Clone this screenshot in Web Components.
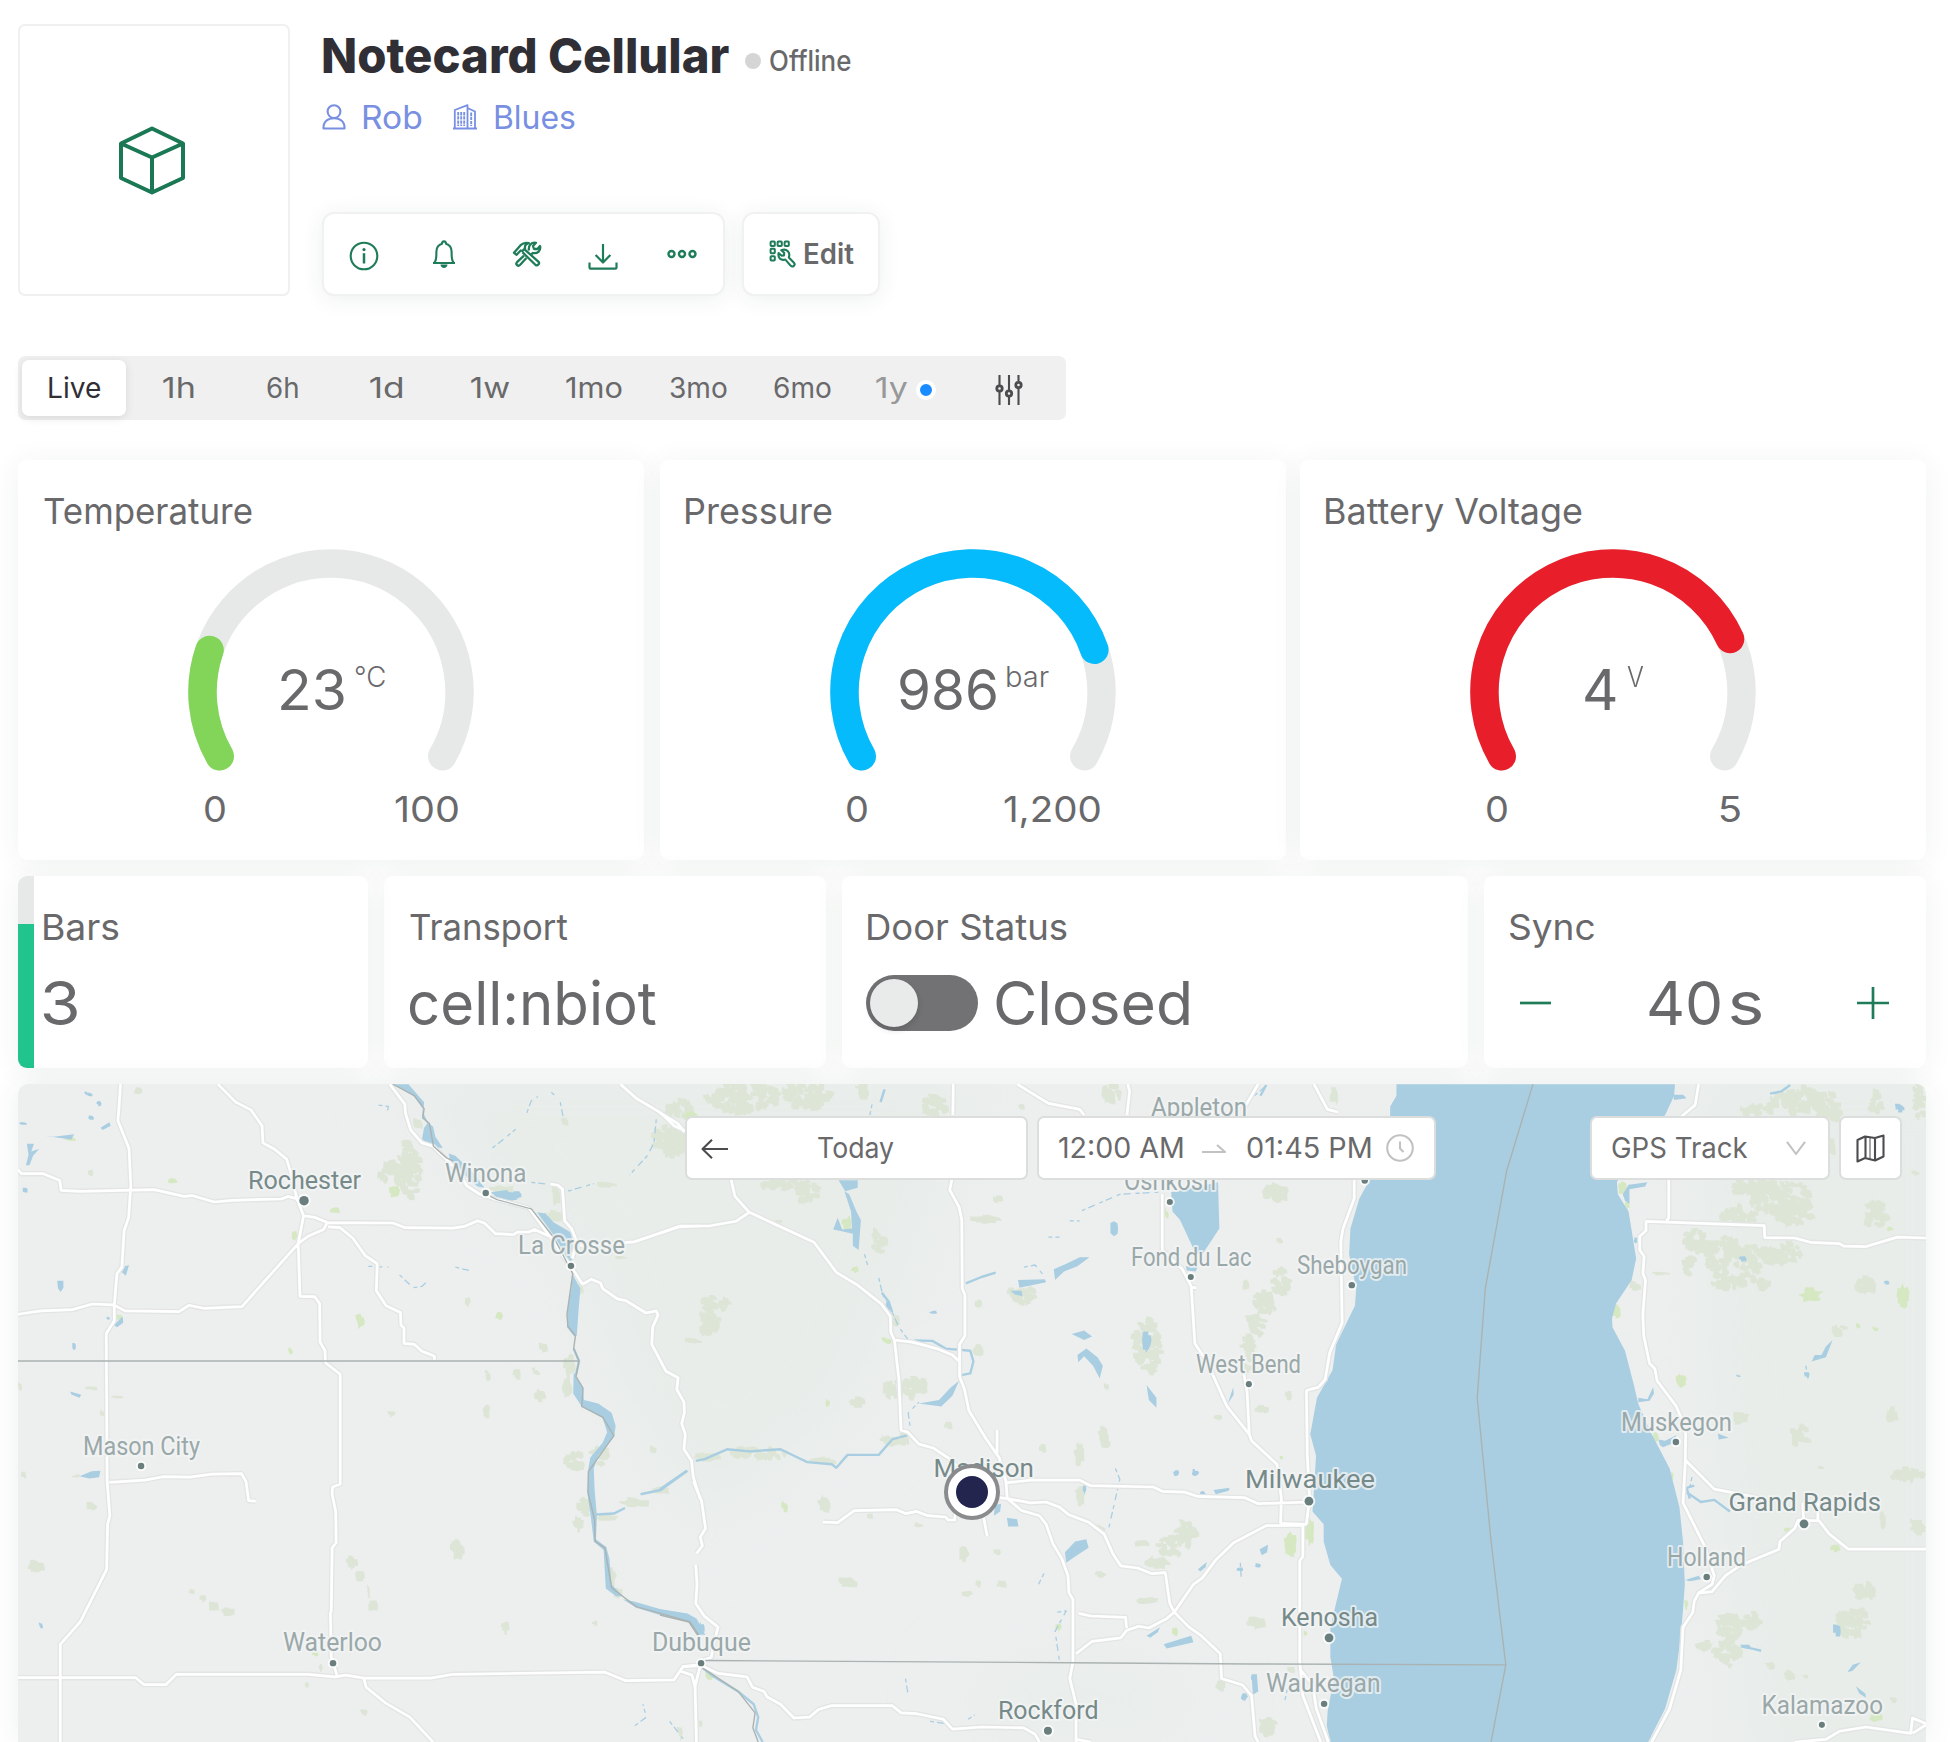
<!DOCTYPE html>
<html lang="en">
<head>
<meta charset="utf-8">
<title>Notecard Cellular</title>
<style>
html,body{margin:0;background:#fff}
body{width:1950px;height:1742px;overflow:hidden;font-family:Inter,"Liberation Sans",sans-serif;color:#69696b}
</style>
</head>
<body>
<device-dashboard></device-dashboard>
<script>
const define = (name, html, setup) => customElements.define(name, class extends HTMLElement {
  constructor() { super(); this.attachShadow({ mode: 'open' }); }
  connectedCallback() {
    this.shadowRoot.innerHTML = typeof html === 'function' ? html(this) : html;
    if (setup) setup(this, this.shadowRoot);
  }
});

/* A single line of text stretched to a given ink width */
define('fit-text', el => `<style>:host{display:inline-block;white-space:pre;line-height:1;flex:none;width:${el.getAttribute('w')}px}span{display:inline-block;transform-origin:0 50%}</style><span>${el.getAttribute('t')}</span>`,
(el, root) => {
  const s = root.querySelector('span'), w = +el.getAttribute('w'), t = el.getAttribute('t');
  const cs = getComputedStyle(el), ctx = document.createElement('canvas').getContext('2d');
  ctx.font = `${cs.fontWeight} ${cs.fontSize} Inter, "Liberation Sans", sans-serif`;
  const m = ctx.measureText(t), left = -m.actualBoundingBoxLeft, ink = m.actualBoundingBoxRight - left;
  const k = w / ink;
  s.style.transform = `translateX(${-left * k}px) scaleX(${k})`;
});

const ICONS = {
  cube: ['0 0 66 69', '<path d="M33 2.5 64 17.5V52L33 66.5 2 52V17.5ZM2 17.5 33 31.5 64 17.5M33 31.5V66.5" stroke-width="4"/>'],
  user: ['0 0 24 26', '<circle cx="12" cy="7.6" r="6.4"/><path d="M1.5 24.5C1 17.5 6 14.3 12 14.3S23 17.5 22.5 24.5Z"/>'],
  building: ['0 0 24 26', '<g stroke-width="1.8"><path d="M0 24.5H24M1.8 24.5V6L14.5 1.2V24.5M14.5 4 22 7.5V24.5"/></g><path d="M5.2 8V22M8.2 8V22M11.2 8V22M18.2 8.5V22" stroke-dasharray="3.4 .8" stroke-width="1.9"/>'],
  info: ['0 0 30 30', '<circle cx="15" cy="15" r="13.3"/><path d="M15 12.2V22.5" stroke-width="2.5"/><circle cx="15" cy="8.6" r="1.6" fill="currentColor" stroke="none"/>'],
  bell: ['0 0 26 30', '<path d="M2 24H24M3.2 24C6 20.5 5.2 17 5.4 12.5 5.6 8.3 8 5.6 11 4.8 11 1.5 15 1.5 15 4.8 18 5.6 20.4 8.3 20.6 12.5 20.8 17 20 20.5 22.8 24"/><path d="M9.5 25.5H16.5C16.5 30 9.5 30 9.5 25.5Z" fill="currentColor" stroke="none"/>'],
  tools: ['0 0 30 26', '<g stroke-width="2.3"><path d="M2 11.8 8.6 4.2C11.5 1.4 14 1.4 16.8 2.2 13.8 3 12.6 5 13 7.4L10.4 10 8.7 9.5 4.6 13.8Z"/><path d="M12.8 8.6 26.6 20.8C28 22.5 25.6 25.2 23.6 24L10.4 11.2"/><path d="M17 9.5C16 4.5 19.4 1 24 1.8L21 5 22 8 25.4 8 28 5C29.2 9.5 25.5 13 21 12L19.2 13.4M14.4 17 8.2 23.8C6 26 3.2 23.2 5 21.2L12 14.6"/></g>'],
  download: ['0 0 30 27', '<path d="M15 1V19.5M7.6 12 15 19.5 22.4 12M1.5 19.5V24.5Q1.5 25.6 2.6 25.6H27.4Q28.5 25.6 28.5 24.5V19.5" stroke-width="2.2"/>'],
  dots: ['0 0 30 10', '<g stroke-width="2.4"><circle cx="4.5" cy="5" r="3"/><circle cx="15" cy="5" r="3"/><circle cx="25.5" cy="5" r="3"/></g>'],
  edit: ['0 0 27 28', '<g stroke-width="2"><rect x="1.6" y="1.6" width="4.2" height="4.4" rx=".8"/><rect x="8.6" y="1.6" width="4.2" height="4.4" rx=".8"/><rect x="15.6" y="1.6" width="4.2" height="4.4" rx=".8"/><rect x="1.6" y="8.8" width="4.2" height="4.4" rx=".8"/><rect x="1.6" y="16.2" width="4.2" height="4.4" rx=".8"/></g><path d="M12.3 10.2 15.2 12.8 15 15.5 12.4 15.6 9.6 13C8.6 17.5 11.5 20.8 16.4 19.6L21.6 25.6C23.8 27.8 26.8 25 25 22.8L19.8 17.4C21.6 12.6 18 8.2 12.3 10.2Z"/>'],
  sliders: ['0 0 28 30', '<path d="M4.5 0V10.5M4.5 17V30M14 0V15.5M14 22V30M23.5 0V6.5M23.5 13V30"/><g stroke-width="2.8"><circle cx="4.5" cy="13.5" r="2.7"/><circle cx="14" cy="18.5" r="2.7"/><circle cx="23.5" cy="10" r="2.7"/></g>'],
  minus: ['0 0 32 32', '<path d="M0 16H31" stroke-width="2.7"/>'],
  plus: ['0 0 32 32', '<path d="M0 16H32M16 0V32" stroke-width="2.7"/>'],
  back: ['0 0 28 20', '<path d="M27 10H1.5M11 .8 1.5 10 11 19.2"/>'],
  to: ['0 0 24 12', '<path d="M0 10H23L15 3"/>'],
  clock: ['0 0 28 28', '<circle cx="14" cy="14" r="12.8"/><path d="M14 7.5V14.5L17.5 18"/>'],
  down: ['0 0 20 14', '<path d="M1 .8 10 13 19 .8"/>'],
  map: ['0 0 29 29', '<path d="M1.5 6 9 2.5 19 4 27.5 1.5V22.5L19 26.5 9 24 1.5 27.5ZM9.5 2.5V24M19 4V26.5"/><path d="M14 3.5V25" stroke-width="1"/>']
};
define('ui-icon', el => { const [vb, body] = ICONS[el.getAttribute('name')]; const [, , w, h] = vb.split(' ');
  return `<style>:host{display:block;flex:none;width:${w}px;height:${h}px}svg{display:block;overflow:visible}</style><svg width="${w}" height="${h}" viewBox="${vb}" fill="none" stroke="currentColor" stroke-width="2.1" stroke-linejoin="round">${body}</svg>`; });

define('tool-panel', `<style>:host{display:flex;box-sizing:border-box;height:84px;border:2px solid #f0f1f1;border-radius:12px;background:#fff;color:#1f7c58;box-shadow:0 3px 22px rgba(20,60,50,.075);align-items:center}</style><slot></slot>`);

define('device-header', `<style>
:host{display:flex;gap:32px;padding-top:24px;height:272px}
.pic{box-sizing:border-box;width:272px;height:272px;border:2px solid #f0f0f0;border-radius:7px;display:grid;place-items:center;color:#1a7855;flex:none;padding-right:4px}
.line{display:flex;align-items:center}
.t{height:64px;color:#302f35;font-size:48.5px;font-weight:800}
.t .st{font-size:28px;font-weight:450;color:#69696b;display:flex;align-items:center;gap:9px;padding-top:10px;margin-left:16px}
.dot{width:16px;height:16px;border-radius:50%;background:#d5d5d5}
.l{height:40px;margin-top:10px;color:#788fe2;font-size:32px}
.tools{gap:17px;margin-top:74px}
.cell{width:80px;display:grid;place-items:center}
.a{width:403px;box-sizing:border-box}.b{width:138px;font-size:28px;font-weight:600}
</style>
<div class="pic"><ui-icon name="cube"></ui-icon></div>
<div>
<div class="line t"><fit-text style="margin-left:1px" w="406" t="Notecard Cellular"></fit-text><span class="st"><i class="dot"></i><fit-text w="81" t="Offline"></fit-text></span></div>
<div class="line l"><ui-icon name="user" style="margin-top:-2px"></ui-icon><fit-text style="margin-left:17px" w="58" t="Rob"></fit-text><ui-icon style="margin-left:32px;margin-top:-2px" name="building"></ui-icon><fit-text style="margin-left:18px" w="80" t="Blues"></fit-text></div>
<div class="line tools"><tool-panel class="a"><div class="cell" style="padding-top:3px"><ui-icon name="info"></ui-icon></div><div class="cell"><ui-icon name="bell"></ui-icon></div><div class="cell" style="padding-left:3px;margin-right:-3px;box-sizing:border-box"><ui-icon style="margin-top:-1px;margin-left:2px" name="tools"></ui-icon></div><div class="cell" style="padding-top:5px;padding-left:3px;box-sizing:border-box"><ui-icon name="download"></ui-icon></div><div class="cell"><ui-icon style="margin-left:2px;margin-top:-1px" name="dots"></ui-icon></div></tool-panel>
<tool-panel class="b"><ui-icon style="margin-left:25px" name="edit"></ui-icon><fit-text style="margin-left:9px;color:#69696b" w="49" t="Edit"></fit-text></tool-panel></div>
</div>`);

define('range-bar', `<style>
:host{display:flex;align-items:center;box-sizing:border-box;width:1048px;height:64px;margin-top:60px;padding:4px;border-radius:7px;background:#f0f0f0;font-size:28px}
.i{width:104px;height:56px;display:flex;align-items:center;justify-content:center}
.on{background:#fff;border-radius:7px;color:#302f35;box-shadow:0 2px 10px rgba(0,0,0,.1)}
.y{color:#98989a;gap:9px;width:104px}
.d{width:12px;height:12px;border-radius:50%;background:#1a8cff;border:4px solid #fff;margin-top:4px}
</style><div class="i on"><fit-text w="51" t="Live"></fit-text></div><div class="i"><fit-text w="31" t="1h"></fit-text></div><div class="i"><fit-text w="31" t="6h"></fit-text></div><div class="i"><fit-text w="32" t="1d"></fit-text></div><div class="i"><fit-text w="38" t="1w"></fit-text></div><div class="i"><fit-text w="56" t="1mo"></fit-text></div><div class="i"><fit-text w="57" t="3mo"></fit-text></div><div class="i"><fit-text w="57" t="6mo"></fit-text></div><div class="i y"><fit-text w="31" t="1y"></fit-text><i class="d"></i></div><div class="i" style="color:#4c4c4f;padding-top:4px;box-sizing:border-box;margin-left:-1px"><ui-icon name="sliders"></ui-icon></div>`);

define('data-card', el => `<style>
:host{display:block;box-sizing:border-box;background:#fff;border-radius:9px;padding:29px 24px 0;box-shadow:0 3px 30px rgba(20,60,45,.065);flex:none}
.h{height:44px;display:flex;align-items:center;font-size:36px;margin-left:1.5px}
</style><div class="h"><fit-text w="${el.getAttribute('tw')}" t="${el.getAttribute('label')}"></fit-text></div><slot></slot>`);

define('arc-gauge', el => {
  const g = n => el.getAttribute(n), pt = a => [143 + 128.5 * Math.cos(a * Math.PI / 180), 143 - 128.5 * Math.sin(a * Math.PI / 180)].map(v => v.toFixed(2)).join(' ');
  const arc = s => `M${pt(210)}A128.5 128.5 0 ${s > 180 ? 1 : 0} 1 ${pt(210 - s)}`;
  return `<style>
:host{display:flex;flex-direction:column;align-items:center;margin-top:16px}
.g{display:grid;place-items:center;height:222px}.g>*{grid-area:1/1}
svg{align-self:start;display:block}
.v{display:flex;gap:11px;align-self:start;align-items:center;height:56px;margin-top:113px;margin-left:3px;font-size:56.5px}
.u{font-size:28px;font-weight:300;margin-top:-26px}
.r{width:253px;height:40px;margin-top:18px;display:flex;justify-content:space-between;align-items:center;font-size:36px}
</style><div class="g"><svg width="286" height="222" fill="none" stroke-width="28.5" stroke-linecap="round"><path d="${arc(240)}" stroke="#e7e9e8"/><path d="${arc(+g('sweep'))}" stroke="${g('color')}"/></svg>
<div class="v"><fit-text w="${g('vw')}" t="${g('value')}"></fit-text><fit-text class="u" w="${g('uw')}" t="${g('unit')}"></fit-text></div></div>
<div class="r"><fit-text w="20" t="0"></fit-text><fit-text w="${g('mw')}" t="${g('max')}"></fit-text></div>`; });

define('big-value', `<style>:host{display:flex;align-items:center;height:60px;margin-top:24px;font-size:60.5px}</style><slot></slot>`);
define('toggle-switch', `<style>:host{display:flex;box-sizing:border-box;width:112px;height:56px;border-radius:28px;padding:4px;background:#727274}i{width:48px;height:48px;border-radius:50%;background:#e9ebea;box-shadow:0 3px 6px rgba(0,0,0,.15)}</style><i></i>`);
define('level-bar', `<style>:host{display:flex;flex-direction:column;justify-content:flex-end;position:absolute;left:0;top:0;width:16px;height:192px;background:#e7e9e8}i{height:75%;background:#22c48d}</style><i></i>`);

/* ---------- Map ---------- */
const KX = 2.24, KY = 7 / 3;
const SHEETS = [
{ x: 0,
  water: ['882,33 915,33 950,75 948,100 960,125 970,132 975,155 992,182 972,180 945,162 950,135 957,125 945,108 947,90 928,62','1005,195 1020,200 1060,240 1085,275 1070,272 1030,235 1008,208','1100,285 1135,280 1160,302 1145,305 1115,300','1203,332 1222,335 1240,355 1280,380 1284,440 1275,450 1255,410 1240,385','1283,478 1300,510 1296,560 1292,620 1285,620 1270,600 1271,560 1280,510','1285,705 1306,742 1308,770 1340,778 1370,800 1379,830 1376,855 1340,900 1330,930 1332,980 1337,1040 1335,1095 1358,1113 1365,1140 1370,1200 1395,1228 1380,1228 1357,1210 1352,1120 1330,1100 1323,1040 1316,990 1318,930 1322,905 1350,870 1360,845 1350,812 1303,785 1284,755','1395,1235 1420,1240 1480,1258 1540,1268 1560,1280 1580,1318 1562,1318 1545,1287 1480,1272 1425,1255','178,948 205,936 225,935 222,950 200,953','225,135 245,122 248,130 230,140','58,222 64,198 60,172 76,172 70,190 88,184 74,200 66,222','96,153 120,156 166,150 160,162 130,158','273,472 280,458 289,455 282,480','128,492 142,492 142,508 136,518 130,510','157,750 182,758 178,765 160,757','255,595 275,575 276,590 262,600'],
  streams: ['1335,1037 1375,1035 1400,1022','1435,990 1480,980 1500,965 1540,935','1285,650 1297,679 1290,712'],
  thin: ['848,82 870,85 868,95','1103,182 1130,160 1155,138','1180,100 1190,72 1205,62','1235,52 1245,62','1255,75 1262,112','1470,115 1465,170 1450,200 1410,245','1190,262 1240,268 1275,282 1330,265','895,478 925,508 945,505 960,490','1020,460 1060,470','825,458 870,460','1422,1530 1448,1510 1440,1480','1500,1520 1530,1560'],
  park: [[917,235,48,130],[880,238,60,45],[935,125,20,30],[1265,120,18,26],[1520,165,75,55],[1520,92,60,40],[1245,290,20,60],[1355,268,45,14],[1130,280,60,20],[1245,340,50,30],[203,240,14,18],[310,48,20,24],[1048,540,14,22],[1217,648,20,20],[1275,690,30,50],[1270,740,20,50],[1157,712,18,32],[1092,712,14,22],[1208,760,26,34],[1090,797,18,28],[1200,705,16,18],[877,803,20,14],[1285,912,38,46],[1310,1010,26,60],[1295,1060,30,34],[1465,887,18,18],[53,944,12,20],[1025,1118,28,46],[205,742,38,10],[262,763,26,8],[230,802,14,18],[205,1018,28,18],[80,1160,34,30],[430,1217,16,10],[455,1232,20,20],[480,1250,26,24],[510,1265,34,20],[790,1150,26,34],[808,1180,20,30],[825,1215,8,36],[835,1250,20,28],[1130,1300,20,30],[1333,1290,14,14],[817,1500,18,14],[1370,1180,20,40],[1385,1220,26,24],[1420,1010,60,22],[1480,980,50,22],[1360,1045,50,16],[1390,438,24,8],[1550,630,30,14],[688,1435,10,20],[45,740,10,22],[1345,900,30,60],[1295,512,20,30],[172,948,20,8],[718,1395,10,18]],
  green: [[387,259,20,16],[882,282,24,32],[750,328,22,16],[659,388,14,26],[806,584,24,38],[650,656,14,18],[1118,573,18,22],[267,578,18,18],[155,160,24,12],[1545,108,34,20],[707,1363,18,8]],
  pond: [[197,56,16,12],[222,78,14,12],[203,111,14,12],[50,125,18,10],[57,281,12,12],[166,645,12,18],[91,1296,9,16],[243,579,8,7],[1150,290,30,16]],
  roads: ['270,33 266,95 264,118 289,183 293,270 288,345 278,375 273,460 262,475 256,550 256,585 238,615 240,960 246,1040 241,1060 239,1165 180,1287 135,1340 135,1568','40,232 48,242 97,242 134,258 137,281 180,283 345,279 412,295 430,293 480,308 520,304 630,301 645,295 665,300','488,33 528,75 562,93 587,130 589,170 615,185 642,208 650,235 665,300 680,340 706,344 733,356 880,357 908,368 1015,369 1040,365 1070,352 1085,357 1110,382 1150,384 1160,378 1185,378 1197,372 1235,390','680,340 668,405 672,528 705,529 716,545 717,635 728,655 729,683 762,710 762,966 745,973 744,990 752,1030 753,1103 744,1115 742,1262 740,1268 742,1370 755,1413','733,356 725,372 690,388 668,405 542,552 456,556 423,549 401,564 280,562 255,548 207,546 163,559 92,562 40,570','735,366 762,368 790,392 818,433 845,452 843,515 865,550 897,566 898,595 905,602 905,638 928,640 945,656 960,662 973,668 973,676','873,33 907,80 908,100 920,140 945,170 970,178 1030,240 1045,270 1075,290 1105,300 1185,322 1240,400 1262,435 1278,457 1305,500','1233,266 1250,269 1260,278 1265,352 1280,370 1292,400 1282,440','1305,500 1325,488 1345,497 1350,510 1383,534 1402,538 1447,567 1470,562 1474,572 1462,600 1460,640 1492,703 1519,718 1516,745 1532,775 1533,800 1527,825 1535,850 1532,885 1549,912 1553,950 1568,1000','1300,410 1400,403 1420,401 1520,366 1568,364','1390,33 1425,66 1480,100 1510,130 1535,142','245,962 325,957 365,949 425,950 475,943 541,942 551,960 557,1005 573,1006','40,1418 304,1418 322,1434 372,1434 395,1410 690,1410 750,1416 775,1412 815,1419 965,1419 1015,1410 1355,1405 1402,1425 1510,1423 1530,1392 1568,1390','815,1419 820,1440 865,1478 918,1510 970,1568','1525,1403 1550,1412 1557,1440 1560,1568'],
  border: ['40,679 1296,679','880,33 928,60 950,90 947,112 962,125 971,178 1000,205 1015,212','1098,295 1115,303 1190,324 1240,390 1283,475 1270,570 1272,598 1289,620 1285,650 1297,679 1290,715 1306,742 1303,785 1350,810 1375,853 1318,937 1317,985 1332,1050 1333,1100 1355,1115 1370,1208 1425,1252 1545,1287 1565,1318'],
  dots: [[681,305,5],[1088,287,3.4],[1279,457,3.4],[316,924,3.4],[746,1384,3.4]] },
{ x: 660,
  water: ['1145,285 1250,262 1253,370 1215,430 1200,428 1185,395 1165,350 1148,330','1178,458 1205,458 1200,470 1180,468','400,257 443,257 443,275 415,283','413,283 424,290 440,330 450,350 445,420 432,410 432,382 402,375 388,372 398,345 408,372 430,370 428,330','882,465 910,452 940,437 962,437 935,458 905,470 885,490','802,490 862,488 865,495 805,508','907,1125 930,1100 955,1095 960,1115 930,1135 910,1150','777,1045 800,1048 803,1065 780,1065','1128,1340 1190,1320 1195,1335 1135,1350','580,778 625,770 650,742 670,725 655,760 630,785','750,1015 764,1012 762,1030 748,1040','1090,735 1112,765 1112,788 1095,770','1284,740 1285,758 1272,778','935,665 955,650 980,670 992,690 985,720 970,690 950,668 937,682','922,616 950,608 968,622 950,630','1343,1118 1362,1108 1360,1125 1348,1132','0,1258 50,1268 75,1280 98,1310 85,1320 65,1288 0,1272','1205,1165 1225,1148 1222,1160 1210,1170','1090,1320 1120,1300 1115,1312 1098,1325','1325,1410 1337,1410 1340,1450 1328,1458','785,515 810,515 812,528 795,524','1240,980 1276,975 1274,982 1245,990'],
  streams: ['0,978 60,935','80,912 100,908 150,885 200,890 270,885 300,900 330,915 385,920 395,928 420,898 490,898 520,862 555,852','95,1395 120,1415 175,1450 210,1480 220,1510 215,1540 230,1568','570,631 610,632 640,650 695,655 702,680 695,708 675,712','685,498 720,483 752,473','497,520 512,540 520,565','494,75 503,45','1345,60 1358,35'],
  thin: ['458,430 465,455','490,485 500,530','520,565 535,600 555,628','560,830 556,800 580,775','475,80 470,105','870,390 895,390','945,328 1030,290 1120,285','918,352 940,352','815,460 840,455 860,480','1020,930 1030,955 1005,1070','890,1265 910,1262 885,1310 895,1380','860,1175 848,1200','550,1420 556,1460','605,1520 640,1525','690,1515 705,1505','1300,1150 1302,1190','1405,1445 1400,1470'],
  park: [[185,65,165,70],[330,60,110,60],[20,165,70,70],[290,268,130,24],[330,285,60,40],[455,50,30,50],[615,85,50,50],[487,403,30,56],[125,548,60,40],[110,590,50,50],[725,348,70,20],[755,302,26,18],[1380,287,46,36],[1093,640,56,136],[1390,495,32,60],[1355,540,56,50],[1335,590,34,60],[1318,660,24,80],[1313,502,20,26],[712,546,18,20],[812,525,60,36],[560,745,80,50],[512,745,30,40],[714,656,26,28],[441,775,38,24],[367,1013,28,40],[645,830,20,20],[110,903,60,20],[225,893,140,22],[365,912,60,18],[530,865,60,26],[858,883,18,24],[940,895,24,60],[995,855,30,46],[942,990,28,50],[680,1130,24,38],[755,1125,16,18],[1178,1075,36,56],[1150,1110,70,40],[1115,1150,50,30],[1077,1104,30,16],[422,1195,40,26],[688,1222,24,18],[765,1200,24,20],[714,1198,12,18],[1093,1238,48,18],[1335,1290,36,32],[1250,810,24,18],[1350,792,36,20],[1407,760,18,28],[1387,398,14,18],[1255,1435,26,28],[1360,1530,32,50],[985,1178,26,22],[985,1070,22,16],[470,1042,16,14],[580,1062,18,12],[1415,1400,18,18],[75,633,30,14],[268,354,20,12],[525,585,22,36],[1000,740,16,18],[1010,55,40,40],[810,85,22,16],[45,1545,12,34],[90,1525,10,18],[1510,60,20,40]],
  green: [[436,465,18,18],[70,105,30,18],[420,360,22,36],[508,632,22,18],[376,777,12,18],[279,1018,16,28],[893,1300,14,20],[1135,338,10,26],[1152,1312,14,26],[110,1412,26,18],[1414,1110,30,60],[1456,1080,22,60],[1445,1315,10,12],[1392,905,10,10]],
  pond: [[1088,632,24,50],[1017,370,20,30],[613,565,18,8],[1330,1420,14,18],[1308,1462,16,20],[1300,1165,16,12],[1340,1156,12,10],[1155,940,16,14],[1200,940,16,16],[93,1300,20,24],[951,978,10,24],[1215,988,14,16],[510,550,12,24]],
  roads: ['0,100 40,125 55,145','158,250 168,295 200,332 345,402 395,472 440,500 495,545 516,575 517,612 525,630','200,332 170,353 110,364 45,364 0,381','525,630 565,635 620,650 655,665 672,682','525,630 535,720 540,840 555,845 580,873 612,882 650,908 700,960','657,33 656,105','655,250 649,280 670,320 676,350 677,510 683,525 683,620 671,640 671,715 682,745 692,795 730,860 760,905 775,960 778,1000','755,840 755,900','778,963 830,957 940,957 965,970 1105,973 1125,983 1175,985 1205,995 1310,998 1340,1012 1455,1008','700,990 778,1000 830,1010 865,1008 895,1020 915,1037 960,1055 995,1083 1015,1130 1032,1157 1070,1162 1100,1175 1132,1173 1142,1245 1152,1265 1185,1300 1210,1318 1255,1362 1258,1420 1305,1435 1325,1460 1333,1555 1340,1568','778,1000 810,1028 850,1040 865,1060 880,1105 900,1140 914,1180 916,1220 925,1235 925,1380 918,1420 932,1480 932,1568','365,1055 398,1056 435,1028 530,1026 550,1035 575,1030 600,1040 640,1043 645,1050 660,1050 663,1020','725,1045 733,1088','75,960 93,1005 102,1070 90,1090 95,1110 82,1128','80,1155 83,1200 80,1245 100,1275 130,1300 120,1340 115,1370 95,1378','50,1392 90,1388 130,1408 195,1416 207,1440 233,1450 240,1463 270,1480 300,1512 335,1510 355,1492 385,1483 520,1483 540,1500 575,1502 635,1515 655,1538 720,1533 815,1535 840,1550 850,1568','90,1390 78,1440','800,33 870,78 940,92 950,105','1048,33 1052,50 1046,105','1125,290 1125,420 1170,465 1190,505 1198,638 1225,680 1270,785 1320,850','1190,508 1201,508','1308,710 1315,750 1320,850 1325,865 1382,920 1392,1000 1390,1058','1555,250 1555,300 1530,370 1525,400 1528,590 1500,660 1490,722 1475,740 1448,748 1450,900 1455,1000 1448,1058 1440,1062 1440,1135 1433,1145 1433,1380 1440,1460 1480,1568','1390,1058 1448,1060','1440,1062 1358,1063 1285,1103 1245,1143 1215,1185 1195,1200 1152,1265 1135,1280 1095,1302 1072,1298 1045,1308 1032,1325 968,1333 932,1362','938,1268 965,1274 1043,1277 1045,1302','1340,33 1305,95','1465,33 1495,92 1518,98','932,1562 965,1568','1435,1400 1462,1435 1470,1490 1497,1568'],
  border: ['100,1378 920,1383 1322,1386','0,1272 65,1288 85,1320','95,1395 175,1450 213,1500 208,1535 220,1568'],
  dots: [[92,1384,3.4],[1142,308,3.2],[1189,483,3.2],[1319,733,3.2],[869,1542,4.2]] },
{ x: 1250, lake: '328,33 952,33 950,60 930,105 905,130 850,200 822,262 824,290 848,330 855,375 865,440 855,490 820,545 811,580 812,600 840,655 860,735 870,780 900,850 940,930 962,1020 970,1100 974,1200 970,1260 964,1330 955,1400 930,1490 892,1568 180,1568 172,1530 174,1495 188,1420 180,1370 180,1300 196,1230 206,1187 180,1155 165,1100 165,1060 140,1030 148,900 135,850 150,765 185,700 193,640 235,550 238,510 222,430 225,370 245,300 265,262 290,180 314,105 314,85 328,60',
  water: ['870,765 890,768 903,740 905,755 895,772 870,775','915,862 930,865 955,852 950,870 925,880 918,875','975,1190 1005,1180 1010,1188 985,1193','835,290 848,268 890,262 885,272 850,278 850,312 840,305','948,58 970,58 978,66 950,70','1258,680 1265,665 1280,665 1290,645 1305,630 1290,670','1048,848 1072,858 1050,862','1338,1405 1350,1388 1368,1382 1350,1402','1357,1438 1378,1455 1380,1465 1365,1455'],
  streams: ['978,985 1010,1008 1040,1003 1075,1030','985,1000 978,975 995,970','1165,55 1190,50 1210,35','1100,1345 1125,1350 1145,1355'],
  thin: ['990,950 985,975','1245,690 1250,720','10,60 38,35','1340,1535 1330,1540'],
  park: [[1225,70,110,60],[1140,92,80,22],[1290,90,60,70],[1300,180,30,40],[1400,75,36,50],[1500,70,24,80],[1130,275,110,44],[1190,300,140,80],[1100,340,90,40],[1220,335,90,50],[1400,335,52,60],[1000,400,50,56],[985,455,40,40],[1060,430,90,80],[1130,440,80,60],[1195,430,80,50],[1080,490,100,40],[1150,500,40,30],[920,475,36,10],[862,505,30,26],[1382,502,56,34],[58,287,46,36],[1098,812,38,32],[1230,850,34,50],[1438,805,26,38],[1470,942,88,30],[1277,928,14,10],[1418,1050,14,44],[1495,1065,40,34],[1375,1215,40,42],[1350,1290,70,70],[1070,1300,60,60],[1120,1285,40,40],[1070,1360,60,60],[1020,1345,40,26],[1165,1390,24,18],[1205,1412,26,24],[1245,1415,14,10],[1315,610,20,30],[1440,1470,16,14],[1490,240,20,10],[1330,600,20,12],[40,1540,26,40]],
  green: [[822,560,20,40],[836,275,20,40],[845,315,10,22],[1258,525,50,36],[1464,530,26,60],[967,726,28,34],[1362,597,10,10],[1400,604,18,12],[908,858,16,24],[945,945,10,20],[1204,1073,16,12],[1310,1115,22,20],[977,1247,10,22],[1402,1510,28,24],[1432,370,14,14]],
  pond: [[1455,88,20,18],[1102,440,16,14],[1426,497,14,12],[1094,714,12,8],[1315,1308,20,24],[1110,1345,24,10],[1248,712,14,14],[864,398,8,14]],
  roads: ['1005,33 997,82 967,108','938,250 938,345 933,352','887,353 1152,363 1153,391 1220,392 1255,402 1320,405 1330,411 1380,412 1450,390 1514,392','887,353 887,375 873,388 873,420 883,435 880,475 886,490 880,570 882,620 895,685 907,697 912,725 955,785 965,810 976,850 975,915 970,1010 1018,1110 1040,1180 1035,1200 1005,1220 995,1240 992,1265 970,1300 965,1400 940,1490 900,1568','975,910 1040,978 1075,985 1150,1000','1005,1221 1035,1217 1065,1180 1100,1155 1185,1118 1187,1100 1220,1070 1228,1050 1275,1052 1297,1082 1340,1118 1514,1118','1220,1568 1290,1562 1320,1543 1380,1533 1480,1548 1484,1512 1514,1525','1484,1548 1514,1528','1238,1010 1240,1050','1272,1010 1272,1050'],
  border: ['0,1386 20,1386 573,1388','634,33 575,235 527,510 509,765 540,1100 573,1388 540,1568'],
  dots: [[257,258,3.4],[228,502,3.4],[132,1006,4.6],[177,1325,4.6],[166,1479,3.4],[954,868,3.4],[1241,1059,4.6],[1023,1183,3.4],[1281,1528,3.2]] }
];
const CITIES = [
  ['Rochester',249,360,1188.5,1],['Winona',446,525.5,1181.5],['La Crosse',519,624,1254.3],['Mason City',84,199,1454.5],['Waterloo',284,381,1651],['Dubuque',653,750,1651],
  ['Appleton',1152,1246,1116],['Oshkosh',1125,1215,1190],['Fond du Lac',1132,1250.5,1266.3],['Sheboygan',1298,1406,1273.6],['West Bend',1197,1300,1373],['Madison',934.5,1033,1476.7,1],
  ['Milwaukee',1246,1374,1487.5,1],['Kenosha',1282,1377,1626,1],['Waukegan',1267,1379.5,1692],['Rockford',999,1097.5,1719,1],['Muskegon',1622,1731,1430.5],['Grand Rapids',1729.5,1880,1511,1],['Holland',1668,1745,1566.3],['Kalamazoo',1762.5,1882,1713.7]];

let seed = 7;
const rnd = () => (seed = (seed * 16807) % 2147483647) / 2147483647;
/* Ragged patch built from right-angled steps, as coarse land-cover data draws.
   Large areas break up into a cluster of smaller patches. */
const patch = ([x, y, w, h]) => {
  if (w * h > 1500) {
    const k = Math.round(w * h / 110), p = 12; let d = '';
    for (let i = 0; i < k; i++) {
      const a = rnd() * Math.PI * 2, r = Math.sqrt(rnd()) / 2;
      d += step([x + Math.cos(a) * w * r, y + Math.sin(a) * h * r, p + rnd() * 10, p + rnd() * 10]);
    }
    return d;
  }
  return step([x, y, w, h]);
};
const step = ([x, y, w, h]) => {
  const n = Math.max(7, Math.round((w + h) / 6)); let d = '';
  for (let i = 0; i < n; i++) {
    const a = i / n * Math.PI * 2, r = .65 + rnd() * .6;
    const px = Math.round(x + Math.cos(a) * w / 2 * r), ny = Math.round(y + Math.sin(a) * h / 2 * r);
    d += i ? (rnd() > .45 ? `V${ny}H${px}` : `L${px} ${ny}`) : `M${px} ${ny}`;
  }
  return d + 'Z';
};
const line = a => a.map(p => 'M' + p.replace(/ /g, 'L')).join('');
const sheet = (s, part) => {
  const t = `<g transform="translate(${s.x} 1070) scale(${1 / KX} ${1 / KY})">`;
  if (part === 'lake') return s.lake ? `${t}<path d="M${s.lake.replace(/ /g, 'L')}Z" fill="#a9cee2"/></g>` : '';
  if (part === 'land') return `${t}<path d="${s.park.map(patch).join('')}" fill="#dde5d6"/><path d="${s.green.map(step).join('')}" fill="#d6e8c2"/></g>`;
  if (part === 'water') return `${t}<path d="${s.water.map(p => 'M' + p.replace(/ /g, 'L') + 'Z').join('')}${s.pond.map(step).join('')}" fill="#a9cee2"/><g fill="none" stroke="#a9cee2"><path class="n" d="${line(s.streams)}" stroke-width="2.4"/><path class="n" d="${line(s.thin)}" stroke-width="1.3" stroke-dasharray="4 3 7 5"/></g></g>`;
  if (part === 'case') return `${t}<path class="n" d="${line(s.roads)}" fill="none" stroke="#e3e5e5" stroke-width="5.4"/></g>`;
  if (part === 'road') return `${t}<path class="n" d="${line(s.roads)}" fill="none" stroke="#fff" stroke-width="2.7"/></g>`;
  if (part === 'border') return `${t}<path class="n" d="${line(s.border)}" fill="none" stroke="#aab3b2" stroke-width="1.4"/></g>`;
  return s.dots.map(([x, y, r]) => `<circle cx="${s.x + x / KX}" cy="${1070 + y / KY}" r="${r * .95}" fill="#6b7e7e" stroke="#fff" stroke-opacity=".75" stroke-width="4" paint-order="stroke"/>`).join('');
};
define('geo-map', () => `<style>:host{display:block}svg{display:block}.n{vector-effect:non-scaling-stroke;stroke-linejoin:round}text{font-family:Roboto,"Liberation Sans",sans-serif;font-size:25.5px;fill:#9aa8a9;paint-order:stroke;stroke:#f3f5f5;stroke-opacity:.75;stroke-width:4px;stroke-linejoin:round}.m{fill:#778a8a;font-size:26.5px}</style>
<svg width="1908" height="658" viewBox="18 1084 1908 658"><defs><filter id="soft"><feGaussianBlur stdDeviation="34"/></filter></defs><rect x="18" y="1084" width="1908" height="658" fill="#edefef"/>
<g fill="#e8edea" filter="url(#soft)"><path d="M400 1060H1000L930 1260 860 1420 700 1540 610 1400 560 1260 450 1180Z"/><path d="M1680 1060H1960V1800H1740L1700 1500Z"/><ellipse cx="1080" cy="1700" rx="120" ry="40"/></g>
${['land', 'lake', 'water', 'case', 'road', 'border', 'dots'].map(p => SHEETS.map(s => sheet(s, p)).join('')).join('')}
${CITIES.map(([n, a, b, y, m]) => `<text x="${a - 1}" y="${y}" textLength="${b - a + 2}" lengthAdjust="spacingAndGlyphs"${m ? ' class="m"' : ''}>${n}</text>`).join('')}
<circle cx="972" cy="1492" r="26" fill="#fff" stroke="#8a8b8d" stroke-width="4"/><circle cx="972" cy="1492" r="16" fill="#24254f"/></svg>`);

define('map-field', `<style>:host{display:flex;box-sizing:border-box;height:64px;background:#fff;border:2px solid #dcdddd;border-radius:7px;align-items:center;font-size:28.5px;flex:none}</style><slot></slot>`);
define('map-panel', `<style>
:host{display:block;position:relative;width:1908px;height:658px;margin-top:16px;border-radius:10px 10px 0 0;overflow:hidden;box-shadow:0 0 30px rgba(20,60,45,.08)}
.c{position:absolute;left:667px;top:32px;display:flex}
.g{color:#c2c2c4}.k{color:#4c4c4f}
</style><geo-map></geo-map>
<div class="c"><map-field style="width:343px"><ui-icon class="k" style="margin-left:14px;margin-top:1px" name="back"></ui-icon><fit-text style="margin-left:89px" w="76" t="Today"></fit-text></map-field>
<map-field style="width:399px;margin-left:9px"><fit-text style="margin-left:20px" w="124" t="12:00 AM"></fit-text><ui-icon class="g" style="margin-left:19px" name="to"></ui-icon><fit-text style="margin-left:21px" w="124" t="01:45 PM"></fit-text><ui-icon class="g" style="margin-left:15px" name="clock"></ui-icon></map-field>
<map-field style="width:240px;margin-left:154px"><fit-text style="margin-left:20px" w="136" t="GPS Track"></fit-text><ui-icon class="g" style="margin-left:38px" name="down"></ui-icon></map-field>
<map-field class="k" style="width:63px;margin-left:9px;justify-content:center"><ui-icon name="map"></ui-icon></map-field></div>`);

define('device-dashboard', `<style>
:host{display:block;width:1908px;padding:0 24px 0 18px}
.row{display:flex}.one{margin-top:40px}.two{margin-top:16px;gap:16px}
.one data-card{width:626px;height:400px}.two data-card{height:192px}
.clip{position:relative;overflow:hidden;border-radius:9px}
.gr{color:#1f7c58}
</style>
<device-header></device-header>
<range-bar></range-bar>
<div class="row one">
<data-card label="Temperature" tw="208"><arc-gauge sweep="49.1" color="#82d559" value="23" vw="63" unit="°C" uw="30" max="100" mw="63"></arc-gauge></data-card>
<data-card style="margin-left:16px" label="Pressure" tw="146"><arc-gauge sweep="190.8" color="#06bbfc" value="986" vw="96" unit="bar" uw="42" max="1,200" mw="96"></arc-gauge></data-card>
<data-card style="margin-left:14px" label="Battery Voltage" tw="256"><arc-gauge sweep="185.6" color="#e81f2b" value="4" vw="31" unit="V" uw="17" max="5" mw="20"></arc-gauge></data-card>
</div>
<div class="row two">
<data-card class="clip" style="width:350px" label="Bars" tw="75"><level-bar></level-bar><big-value><fit-text style="margin-left:1px" w="34" t="3"></fit-text></big-value></data-card>
<data-card style="width:442px" label="Transport" tw="158"><big-value><fit-text style="margin-left:2px" w="246" t="cell:nbiot"></fit-text></big-value></data-card>
<data-card style="width:626px" label="Door Status" tw="199"><big-value><toggle-switch></toggle-switch><fit-text style="margin-left:18px" w="193" t="Closed"></fit-text></big-value></data-card>
<data-card style="width:442px" label="Sync" tw="84"><big-value><ui-icon class="gr" style="margin-left:12px" name="minus"></ui-icon><fit-text style="margin-left:97px" w="71" t="40"></fit-text><fit-text style="margin-left:11px" w="30" t="s"></fit-text><ui-icon class="gr" style="margin-left:96px" name="plus"></ui-icon></big-value></data-card>
</div>
<map-panel></map-panel>`);
</script>
</body>
</html>
